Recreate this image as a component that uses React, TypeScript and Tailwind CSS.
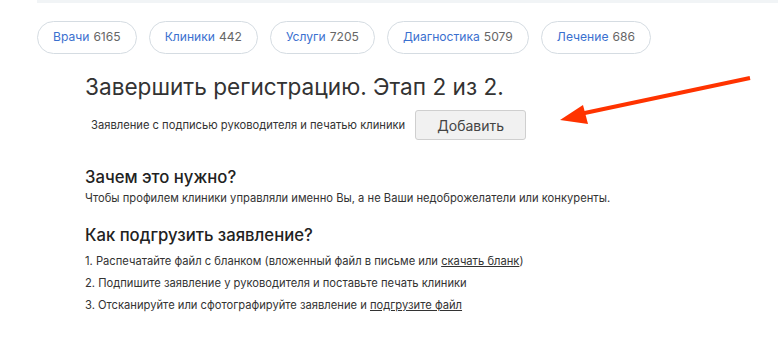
const pills = [
  { label: "Врачи", count: "6165" },
  { label: "Клиники", count: "442" },
  { label: "Услуги", count: "7205" },
  { label: "Диагностика", count: "5079" },
  { label: "Лечение", count: "686" },
]

const App = () => {
  return (
    <div className="relative w-[778px] h-[349px] bg-white overflow-hidden text-[#333] font-['Inter',sans-serif]">
      <div className="ml-[37px] h-[3px] bg-[#f1f4f6]" />

      <div className="flex gap-3 pl-[37px] mt-[18px]">
        {pills.map(p => (
          <div
            key={p.label}
            className="h-[33px] px-[15px] flex items-center rounded-full border border-[#d5dce2] text-[12.1px]"
          >
            <span className="text-[#3a70cf]">{p.label}</span>
            <span className="ml-[4px] text-[#666]">{p.count}</span>
          </div>
        ))}
      </div>

      <div className="pl-[85px] mt-[20px]">
        <h1 className="text-[22.6px] leading-[26px] text-[#333]">Завершить регистрацию. Этап 2 из 2.</h1>

        <div className="flex items-center mt-[10px] pl-[6px]">
          <p className="text-[11.2px] text-[#333]">Заявление с подписью руководителя и печатью клиники</p>
          <button className="ml-[10px] w-[111px] h-[30px] rounded-[3px] border border-[#cfcfcf] bg-[#f1f1f1] text-[14px] text-[#444]">
            Добавить
          </button>
        </div>

        <h2 className="mt-[27px] text-[16.7px] leading-[20px] font-medium text-[#222]">Зачем это нужно?</h2>
        <p className="mt-[3px] text-[11.2px] text-[#333]">
          Чтобы профилем клиники управляли именно Вы, а не Ваши недоброжелатели или конкуренты.
        </p>

        <h2 className="mt-[17px] text-[16.7px] leading-[22px] font-medium text-[#222]">Как подгрузить заявление?</h2>
        <ol className="mt-[4px] text-[11.2px] text-[#333] leading-[22px]">
          <li>1. Распечатайте файл с бланком (вложенный файл в письме или <span className="underline">скачать бланк</span>)</li>
          <li>2. Подпишите заявление у руководителя и поставьте печать клиники</li>
          <li>3. Отсканируйте или сфотографируйте заявление и <span className="underline">подгрузите файл</span></li>
        </ol>
      </div>

      <svg className="absolute left-0 top-0" width="778" height="349" viewBox="0 0 778 349">
        <line x1="750" y1="78" x2="580" y2="114" stroke="#ff3300" strokeWidth="4" />
        <polygon points="560,120 583,105 588,124" fill="#ff3300" />
      </svg>
    </div>
  )
}

export default App
